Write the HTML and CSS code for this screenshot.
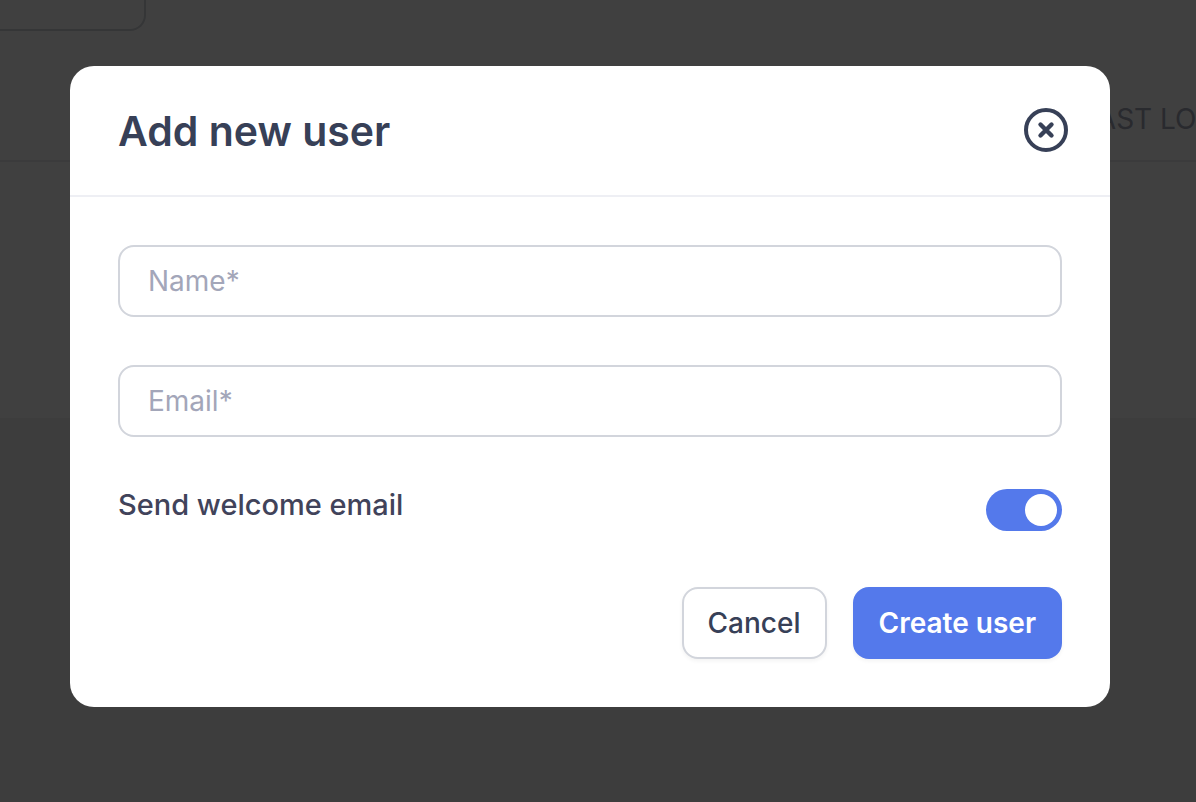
FILE: index.html
```html
<!DOCTYPE html>
<html lang="en">
<head>
    <meta charset="UTF-8">
    <meta name="viewport" content="width=device-width, initial-scale=1.0">
    <title>Add new user</title>
    <link rel="stylesheet" href="styles.css">
</head>
<body>
    <main class="page">
        <section class="panel">
            <div class="filter-box"></div>
            <table class="users">
                <thead>
                    <tr>
                        <th></th>
                        <th class="last-login">LAST LOGIN</th>
                    </tr>
                </thead>
            </table>
        </section>
    </main>

    <div class="overlay">
        <div class="modal" role="dialog" aria-modal="true" aria-labelledby="modalTitle">
            <header class="modal-header">
                <h1 id="modalTitle">Add new user</h1>
                <button type="button" class="close-btn" aria-label="Close">
                    <svg width="44" height="44" viewBox="0 0 44 44" fill="none" stroke="currentColor">
                        <circle cx="22" cy="22" r="20" stroke-width="4"/>
                        <path d="M16.5 16.5l11 11M27.5 16.5l-11 11" stroke-width="4.4" stroke-linecap="round"/>
                    </svg>
                </button>
            </header>
            <form class="modal-body">
                <input type="text" class="field" name="name" placeholder="Name*" aria-label="Name" required>
                <input type="email" class="field" name="email" placeholder="Email*" aria-label="Email" required>
                <div class="switch-row">
                    <label for="welcome">Send welcome email</label>
                    <input type="checkbox" class="switch" id="welcome" name="welcome" checked>
                </div>
                <div class="actions">
                    <button type="button" class="btn btn-cancel">Cancel</button>
                    <button type="submit" class="btn btn-create">Create user</button>
                </div>
            </form>
        </div>
    </div>
</body>
</html>
```
FILE: styles.css
```css
* {
    box-sizing: border-box;
}
body {
    margin: 0;
    min-height: 100vh;
    overflow: hidden;
    font-family: Inter, "Liberation Sans", sans-serif;
    font-size: 28px;
    color: #374057;
    background-color: #f4f4f4;
}
.panel {
    height: 418px;
    background-color: #fff;
}
.filter-box {
    width: 146px;
    height: 31px;
    border: 2px solid #d2d5da;
    border-top: none;
    border-left: none;
    border-bottom-right-radius: 16px;
}
.users {
    width: 100%;
    margin-top: 46px;
    table-layout: fixed;
    border-collapse: collapse;
}
.users th {
    height: 84px;
    padding: 0;
    border-bottom: 2px solid #ececf0;
    font-weight: 400;
    color: #a3a6b9;
    text-align: left;
    white-space: nowrap;
}
.users .last-login {
    width: 115px;
}
.overlay {
    position: fixed;
    inset: 0;
    padding: 66px 86px 66px 70px;
    background-color: rgba(0, 0, 0, 0.75);
}
.modal {
    background-color: #fff;
    border-radius: 24px;
}
.modal-header {
    display: flex;
    align-items: flex-start;
    justify-content: space-between;
    padding: 42px 42px 41px 48px;
    border-bottom: 2px solid #eeeff4;
}
.modal-header h1 {
    margin: 0;
    font-size: 41px;
    line-height: 46px;
    font-weight: 600;
}
.close-btn {
    display: flex;
    padding: 0;
    border: none;
    background: none;
    color: inherit;
    cursor: pointer;
}
.modal-body {
    display: flex;
    flex-direction: column;
    gap: 48px;
    padding: 48px;
}
.field {
    width: 100%;
    height: 72px;
    padding: 0 28px;
    border: 2px solid #d2d5dc;
    border-radius: 16px;
    background-color: #fff;
    font: inherit;
    color: inherit;
}
.field::placeholder {
    color: #a3a6b9;
    opacity: 1;
}
.switch-row {
    display: flex;
    align-items: flex-start;
    justify-content: space-between;
}
.switch-row label {
    font-size: 29px;
    line-height: 40px;
    font-weight: 500;
    color: #41435a;
}
.switch {
    appearance: none;
    display: flex;
    align-items: center;
    width: 76px;
    height: 42px;
    margin: 4px 0 8px;
    padding: 0 5px;
    border-radius: 21px;
    background-color: #c4c8d2;
    cursor: pointer;
}
.switch::before {
    content: "";
    width: 32px;
    height: 32px;
    border-radius: 50%;
    background-color: #fff;
}
.switch:checked {
    justify-content: flex-end;
    background-color: #5479eb;
}
.actions {
    display: flex;
    justify-content: flex-end;
    gap: 26px;
}
.btn {
    height: 72px;
    padding: 0 24px;
    border: 2px solid #5479eb;
    border-radius: 16px;
    font: inherit;
    font-weight: 500;
    box-shadow: 0 2px 4px rgba(0, 0, 0, 0.05);
    cursor: pointer;
}
.btn-cancel {
    border-color: #d2d5dc;
    background-color: #fff;
    color: #374057;
}
.btn-create {
    background-color: #5479eb;
    color: #fff;
    font-weight: 600;
}
```
